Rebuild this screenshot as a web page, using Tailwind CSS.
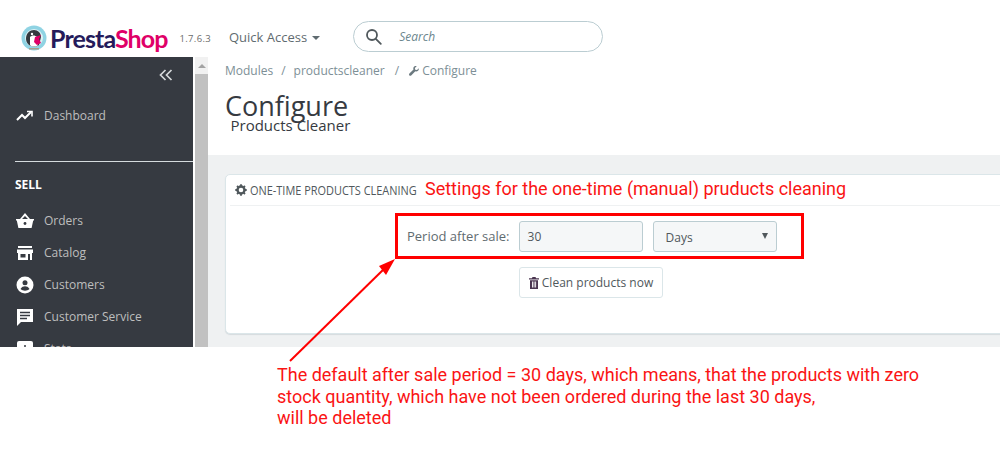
<!DOCTYPE html>
<html lang="en">
<head>
<meta charset="utf-8">
<title>Configure - Products Cleaner</title>
<script src="https://cdn.jsdelivr.net/npm/@tailwindcss/browser@4"></script>
</head>
<body class="bg-white">
<div class="relative w-[1000px] h-[457px] overflow-hidden bg-white font-['Open_Sans',sans-serif] text-[#6c868e]">
  <!-- top bar -->
  <header class="h-[57px] flex items-center bg-white">
    <div class="ml-[21px] mt-[18px] flex items-center w-[208px]">
      <svg class="w-[26px] h-[26px] shrink-0" viewBox="0 0 26 26">
        <circle cx="13" cy="13" r="12.5" fill="#8fd3e3"/>
        <circle cx="13" cy="13" r="9" fill="#dff1f4"/>
        <path d="M5 14c0-6 4-9 8-9s7 3 7 7l-2 8c-2 2-6 2-8 1-3-1-5-4-5-7z" fill="#34393f"/>
        <path d="M9 12c2-2 5-2 7 0l1 8c-2 2-6 2-8 0z" fill="#fff"/>
        <path d="M14 12l6-2-2 4 2 4-4 2-3-3z" fill="#df0067"/>
        <circle cx="11" cy="9" r="1.2" fill="#fff"/>
        <path d="M8 23h10v1.5H8z" fill="#a8a08c"/>
      </svg>
      <span class="ml-[3px] text-[25px] leading-[30px] font-bold tracking-[-0.9px] font-['Lato',sans-serif] text-[#251b5b]">Presta<span class="text-[#df0067]">Shop</span></span>
      <span class="ml-[12px] mt-[3px] text-[9.500px] tracking-[0.3px] text-[#6c6c6c]">1.7.6.3</span>
    </div>
    <div class="mt-[18px] flex items-center gap-[5px] text-[13px] text-[#5f6b70]">
      Quick Access
      <span class="w-0 h-0 border-x-[4px] border-x-transparent border-t-[4px] border-t-[#5f6b70] mt-[1px]"></span>
    </div>
    <div class="ml-[33px] mt-[15px] w-[250px] h-[31px] rounded-full border border-[#bbcdd2] flex items-center">
      <svg class="ml-[11px] w-[17px] h-[17px]" viewBox="0 0 17 17" fill="none" stroke="#50585c" stroke-width="1.8">
        <circle cx="7" cy="7" r="5"/><path d="M10.8 10.8l5 5" stroke-linecap="round"/>
      </svg>
      <span class="ml-[17px] mt-[2px] text-[12px] italic text-[#6c868e]">Search</span>
    </div>
  </header>

  <!-- app area -->
  <div class="h-[290px] flex overflow-hidden">
    <aside class="w-[193px] shrink-0 bg-[#363a41] text-[#bebebe] text-[12px]">
      <div class="h-[43px] flex justify-end pr-[20px] pt-[11px]">
        <svg class="w-[14px] h-[14px]" viewBox="0 0 14 14" fill="none" stroke="#d5d8da" stroke-width="1.7"><path d="M6.5 2L1.5 7l5 5M12.5 2l-5 5 5 5"/></svg>
      </div>
      <a class="flex items-center h-[32px] pl-[16px]">
        <svg class="w-[18px] h-[12px] mr-[10px]" viewBox="0 0 18 12" fill="none" stroke="#fff" stroke-width="2"><path d="M1 10l5-5 3 3 6-6"/><path d="M11 1.5h5v5" stroke-width="1.6"/></svg>
        Dashboard
      </a>
      <div class="ml-[15px] mt-[29px] border-t border-[#d5dbde]"></div>
      <div class="ml-[15px] mt-[15px] mb-[12px] text-[12px] leading-[16px] font-bold text-white">SELL</div>
      <a class="flex items-center h-[32px] pl-[16px]">
        <svg class="w-[18px] h-[16px] mr-[10px]" viewBox="0 0 18 16" fill="#fff"><path d="M0 6h18v1.6h-.8L15.6 15H2.4L.8 7.600H0z"/><path d="M4 6l5-6 5 6h-2L9 3 6 6z"/><circle cx="9" cy="10.500" r="1.400" fill="#363a41"/></svg>
        Orders
      </a>
      <a class="flex items-center h-[32px] pl-[16px]">
        <svg class="w-[18px] h-[14px] mr-[10px]" viewBox="0 0 18 14" fill="#fff"><path d="M2 0h14v2H2z"/><path d="M1 3.500h16v3.500h-1v7H2V7H1z"/><path d="M4.500 8h5v3.500h-5zM12 8h2v6h-2z" fill="#363a41"/></svg>
        Catalog
      </a>
      <a class="flex items-center h-[32px] pl-[16px]">
        <svg class="w-[18px] h-[18px] mr-[10px]" viewBox="0 0 18 18"><circle cx="9" cy="9" r="8.500" fill="#fff"/><circle cx="9" cy="6.800" r="2.500" fill="#363a41"/><path d="M4.500 13c1-2 3-2.700 4.500-2.700s3.500.7 4.500 2.700c-2.500 2.200-6.500 2.200-9 0z" fill="#363a41"/></svg>
        Customers
      </a>
      <a class="flex items-center h-[32px] pl-[16px]">
        <svg class="w-[18px] h-[18px] mr-[10px]" viewBox="0 0 18 18"><path d="M1 1h16v13H5l-4 4z" fill="#fff"/><path d="M4 4.500h10M4 7.500h10M4 10.500h7" stroke="#363a41" stroke-width="1.300"/></svg>
        Customer Service
      </a>
      <a class="flex items-center h-[32px] pl-[16px]">
        <svg class="w-[18px] h-[18px] mr-[10px]" viewBox="0 0 18 18"><rect x="1" y="1" width="16" height="16" rx="2" fill="#fff"/><path d="M5 8v6M9 5v9M13 10v4" stroke="#363a41" stroke-width="1.500"/></svg>
        Stats
      </a>
    </aside>

    <!-- scrollbar -->
    <div class="w-[2px] shrink-0 bg-white"></div>
    <div class="w-[13px] shrink-0 bg-[#f1f1f1] flex flex-col">
      <div class="h-[17px] flex justify-center pt-[7px]">
        <span class="w-0 h-0 border-x-[4px] border-x-transparent border-b-[4px] border-b-[#a3a3a3]"></span>
      </div>
      <div class="flex-1 bg-[#c1c1c1]"></div>
    </div>

    <!-- content -->
    <main class="flex-1 min-w-0 bg-[#eff1f2] flex flex-col">
      <div class="h-[98px] shrink-0 bg-white pl-[17px]">
        <div class="pt-[6px] flex items-center text-[12px] leading-[16px] text-[#7d8f96]">
          <span>Modules</span>
          <span class="mx-[8px]">/</span>
          <span>productscleaner</span>
          <span class="mx-[10px]">/</span>
          <svg class="w-[10px] h-[10px] mr-[3px]" viewBox="0 0 10 10" fill="#6c7a80"><path d="M9.800 2.300L8 4 6.200 3.700 5.900 2 7.700.2C6.300-.3 4.800.400 4.400 1.800c-.2.6-.1 1.200.1 1.700L.4 7.600c-.5.500-.5 1.300 0 1.800s1.300.5 1.800 0L6.300 5.300c1.700.7 3.800-.5 3.500-3z"/></svg>
          <span>Configure</span>
        </div>
        <h1 class="mt-[11px] text-[27px] leading-[32px] font-normal text-[#363a41]">Configure</h1>
        <div class="-mt-[7px] ml-[5.500px] text-[15px] leading-[20px] text-[#363a41]">Products Cleaner</div>
      </div>

      <section class="mt-[19px] ml-[17px] -mr-[10px] h-[160px] shrink-0 bg-white rounded-[5px] border border-[#dbe6e9] shadow-[0_1px_1px_#d5dbde] px-[4px]">
        <div class="h-[31px] border-b border-[#eff1f2] flex items-center pl-[5px] text-[#50585c]">
          <svg class="w-[12px] h-[12px] mr-[3px] shrink-0" viewBox="0 0 12 12"><circle cx="6" cy="6" r="3.500" fill="none" stroke="#50585c" stroke-width="2.400"/><path d="M6 .3v2M6 9.700v2M.3 6h2M9.700 6h2M2 2l1.400 1.400M8.600 8.600L10 10M2 10l1.400-1.400M8.600 3.400L10 2" stroke="#50585c" stroke-width="1.800"/></svg>
          <span class="origin-left scale-x-[0.81] text-[13.500px] whitespace-nowrap">ONE-TIME PRODUCTS CLEANING</span>
        </div>
        <div class="pl-[177px] pt-[15px] flex items-center h-[31px] box-content">
          <label class="text-[13px] text-[#5f6b70] whitespace-nowrap">Period after sale:</label>
          <div class="ml-[9px] w-[124px] h-[31px] rounded-[3px] border border-[#bbcdd2] bg-[#f5f7f8] pl-[8px] flex items-center text-[12px] text-[#50585c]">30</div>
          <div class="ml-[10px] w-[124px] h-[31px] rounded-[3px] border border-[#bbcdd2] bg-[#f5f7f8] pl-[12px] pr-[8px] flex items-center justify-between text-[12px] text-[#50585c]">
            <span class="mt-[3px]">Days</span>
            <span class="w-0 h-0 border-x-[3.500px] border-x-transparent border-t-[6px] border-t-[#50585c] -mt-[2px]"></span>
          </div>
        </div>
        <div class="pl-[289px] mt-[15px]">
          <button class="h-[31px] w-[144px] rounded-[3px] border border-[#dbe6e9] bg-white flex items-center justify-center text-[12px] text-[#50585c] whitespace-nowrap">
            <svg class="w-[10px] h-[12px] mr-[3px]" viewBox="0 0 10 12" fill="#4a3550"><path d="M3.500 0h3l.6 1.300H10v1.200H0V1.300h2.900z"/><path fill-rule="evenodd" d="M1 3.200h8V12H1zM3 4.500v6h.9v-6zM4.600 4.500v6h.9v-6zM6.200 4.500v6h.9v-6z"/></svg>
            Clean products now
          </button>
        </div>
      </section>
    </main>
  </div>

  <!-- note below the screenshot -->
  <p class="ml-[277px] mt-[17px] w-[680px] font-['Roboto',sans-serif] text-[18px] leading-[21.500px] text-[#fa1414]">
    The default after sale period = 30 days, which means, that the products with zero<br>
    stock quantity, which have not been ordered during the last 30 days,<br>
    will be deleted
  </p>

  <!-- annotations drawn over the screenshot -->
  <div class="absolute left-[425px] top-[178px] font-['Roboto',sans-serif] text-[18px] leading-[22px] text-[#fa1414] whitespace-nowrap">Settings for the one-time (manual) pruducts cleaning</div>
  <div class="absolute left-[395px] top-[213px] w-[409px] h-[46px] border-[3px] border-[#ff0000]"></div>
  <svg class="absolute left-0 top-0 w-[1000px] h-[457px] pointer-events-none" viewBox="0 0 1000 457">
    <path d="M290 361L386 267" stroke="#ff0000" stroke-width="2"/>
    <path d="M395 259L379 266L386 275Z" fill="#ff0000"/>
  </svg>
</div>
</body>
</html>
